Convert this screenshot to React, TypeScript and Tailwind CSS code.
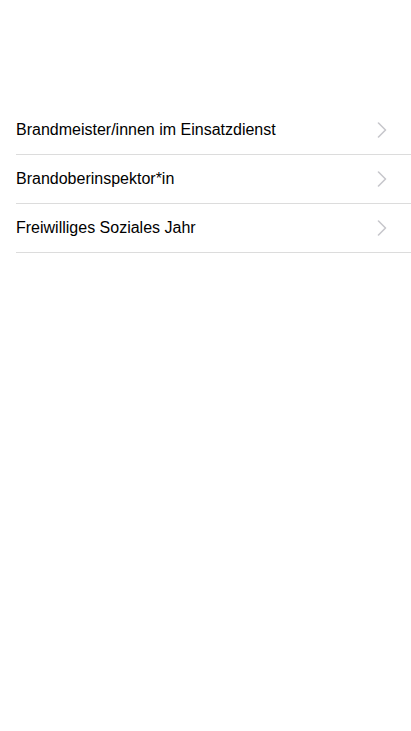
const items = ['Brandmeister/innen im Einsatzdienst', 'Brandoberinspektor*in', 'Freiwilliges Soziales Jahr'];

function Chevron() {
  return (
    <svg width="10" height="16" viewBox="0 0 10 16" fill="none" className="text-[#c7c7cc]">
      <polyline points="1.5,1 8.5,8 1.5,15" stroke="currentColor" strokeWidth="1.6" strokeLinecap="round" strokeLinejoin="round" />
    </svg>
  );
}

export default function App() {
  return (
    <div className="w-[411px] h-[731px] bg-white overflow-hidden" style={{ fontFamily: '"Liberation Sans", Arial, sans-serif' }}>
      <ul className="pt-[106px] pl-4">
        {items.map(label => (
          <li key={label} className="h-[49px] flex items-center justify-between border-b border-[#dcdcdc] pr-[24px]">
            <span className="text-[16px] text-black">{label}</span>
            <Chevron />
          </li>
        ))}
      </ul>
    </div>
  );
}
